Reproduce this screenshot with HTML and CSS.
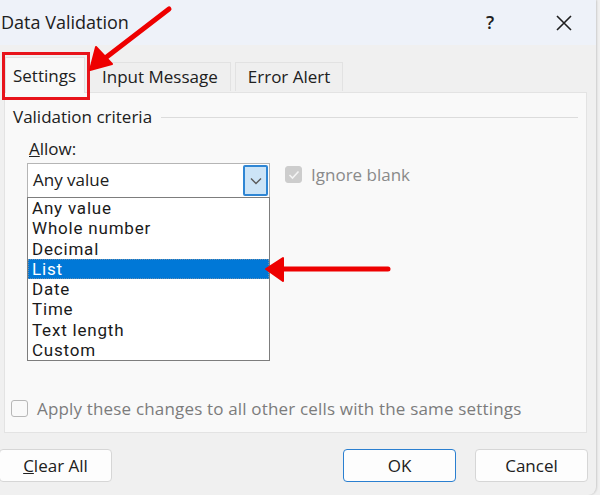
FILE: index.html
```html
<!DOCTYPE html>
<html lang="en">
<head>
    <meta charset="UTF-8">
    <meta name="viewport" content="width=device-width, initial-scale=1.0">
    <title>Data Validation</title>
    <link rel="stylesheet" href="styles.css">
</head>
<body>
    <div class="dialog">
        <div class="titlebar">
            <span class="title">Data Validation</span>
            <span class="help">?</span>
            <span class="close">
                <svg width="16" height="16" viewBox="0 0 16 16"><path d="M1 1 L15 15 M15 1 L1 15" stroke="#1f1f1f" stroke-width="1.6" fill="none"/></svg>
            </span>
        </div>

        <div class="tabs">
            <div class="tab active">Settings</div>
            <div class="tab">Input Message</div>
            <div class="tab">Error Alert</div>
        </div>

        <div class="panel">
            <div class="group-title">
                <span>Validation criteria</span>
                <div class="rule"></div>
            </div>

            <div class="allow-label"><u>A</u>llow:</div>

            <div class="allow-row">
                <div class="combo-wrap">
                    <div class="combo">
                        <span class="combo-text">Any value</span>
                        <span class="combo-btn">
                            <svg width="12" height="8" viewBox="0 0 12 8"><path d="M1 1.5 L6 6.5 L11 1.5" stroke="#5a5a5a" stroke-width="1.4" fill="none"/></svg>
                        </span>
                    </div>
                    <ul class="listbox">
                        <li>Any value</li>
                        <li>Whole number</li>
                        <li>Decimal</li>
                        <li class="selected">List</li>
                        <li>Date</li>
                        <li>Time</li>
                        <li>Text length</li>
                        <li>Custom</li>
                    </ul>
                </div>
                <label class="check disabled">
                    <span class="box checked">
                        <svg width="12" height="10" viewBox="0 0 12 10"><path d="M1.5 5 L4.5 8 L10.5 1.5" stroke="#f4f4f4" stroke-width="1.6" fill="none"/></svg>
                    </span>
                    Ignore blank
                </label>
            </div>

            <label class="check apply">
                <span class="box"></span>
                Apply these changes to all other cells with the same settings
            </label>
        </div>

        <div class="buttons">
            <button class="btn clear"><u>C</u>lear All</button>
            <div class="spacer"></div>
            <button class="btn ok">OK</button>
            <button class="btn">Cancel</button>
        </div>
    </div>

    <!-- red annotation arrows drawn over the screenshot -->
    <svg class="marks" width="600" height="495" viewBox="0 0 600 495">
        <rect x="3.5" y="53.5" width="85" height="45" fill="none" stroke="#e8141b" stroke-width="3"/>
        <line x1="169" y1="9" x2="104" y2="59" stroke="#ee0000" stroke-width="5" stroke-linecap="round"/>
        <polygon points="90,70 96,47 112,64" fill="#ee0000" stroke="#ee0000" stroke-width="2" stroke-linejoin="round"/>
        <line x1="388" y1="269" x2="280" y2="269" stroke="#ee0000" stroke-width="5" stroke-linecap="round"/>
        <polygon points="266,269 283,258 283,281" fill="#ee0000" stroke="#ee0000" stroke-width="2" stroke-linejoin="round"/>
    </svg>
</body>
</html>
```

FILE: styles.css
```css
body {
    margin: 0;
    width: 600px;
    height: 495px;
    overflow: hidden;
    position: relative;
    font-family: "Open Sans", "Noto Sans", sans-serif;
    font-size: 17px;
    font-weight: 500;
    color: #202020;
    background-color: #f0f0f0;
}
.dialog {
    width: 596px;
    height: 495px;
    background: #f0f0f0;
    border-bottom-right-radius: 8px;
    box-shadow: 1px 0 2px rgba(0, 0, 0, 0.15);
}
.titlebar {
    height: 45px;
    display: flex;
    align-items: center;
    background: #eef2f9;
    padding-left: 1px;
}
.title {
    font-size: 18px;
    font-weight: 400;
    flex: 1;
    margin-top: -2px;
}
.help {
    font-size: 18px;
    font-weight: 600;
    width: 70px;
    margin-top: -2px;
}
.close {
    width: 40px;
    display: flex;
}

/* abas */
.tabs {
    display: flex;
    align-items: flex-end;
    height: 47px;
    padding-left: 5px;
}
.tab {
    height: 28px;
    line-height: 28px;
    padding: 0 12px;
    border: 1px solid #e2e2e2;
    border-bottom: none;
    background: #efefef;
    margin-left: 4px;
    margin-bottom: 1px;
}
.tab.active {
    height: 35px;
    line-height: 36px;
    margin-left: 0;
    margin-bottom: -1px;
    padding: 0 8px 0 7px;
    background: #f9f9f9;
    position: relative;
    z-index: 1;
}

.panel {
    height: 339px;
    margin: 0 9px 0 4px;
    background: #f9f9f9;
    border: 1px solid #e3e3e3;
    position: relative;
}
.group-title {
    display: flex;
    align-items: center;
    height: 23px;
    padding: 12px 8px 0 8px;
}
.group-title .rule {
    flex: 1;
    height: 1px;
    background: #dcdcdc;
    margin-left: 9px;
    margin-top: 1px;
}
.allow-label {
    height: 23px;
    line-height: 23px;
    margin: 9px 0 0 24px;
}
.allow-row {
    display: flex;
    align-items: flex-start;
    margin: 3px 0 0 22px;
}
.combo-wrap {
    width: 243px;
}
.combo {
    height: 33px;
    display: flex;
    align-items: center;
    background: #fff;
    border: 1px solid #b5b5b5;
    border-bottom: none;
}
.combo-text {
    flex: 1;
    padding-left: 5px;
    margin-top: -3px;
}
.combo-btn {
    width: 21px;
    height: 27px;
    margin-right: 1px;
    display: flex;
    align-items: center;
    justify-content: center;
    background: #cce4f7;
    border: 2px solid #2f86d4;
    border-radius: 2px;
}
.listbox {
    list-style: none;
    margin: 0;
    padding: 0;
    height: 162px;
    background: #fff;
    border: 1px solid #7d7d7d;
    font-family: Roboto, "Open Sans", sans-serif;
    font-weight: 400;
    letter-spacing: 0.8px;
    color: #1a1a1a;
}
.listbox li {
    height: 20.3px;
    line-height: 20px;
    padding-left: 4px;
}
.listbox li.selected {
    background: #0078d7;
    color: #fff;
    outline: 1px dotted #6a8fb0;
    outline-offset: -1px;
}

.check {
    display: flex;
    align-items: center;
    gap: 9px;
    color: #7c7c7c;
}
.check.disabled {
    margin: 0 0 0 15px;
    color: #8a8a8a;
}
.box {
    width: 15px;
    height: 15px;
    border: 1px solid #b7b7b7;
    border-radius: 3px;
    background: #f9f9f9;
    display: flex;
    align-items: center;
    justify-content: center;
}
.box.checked {
    background: #cdcdcd;
    border-color: #cdcdcd;
}
.check.apply {
    position: absolute;
    left: 6px;
    top: 304px;
    letter-spacing: 0.17px;
}

/* botoes */
.buttons {
    display: flex;
    padding-top: 16px;
    padding-right: 8px;
}
.btn {
    height: 33px;
    font-family: inherit;
    font-size: 17px;
    font-weight: 500;
    color: #202020;
    background: #fdfdfd;
    border: 1px solid #d6d6d6;
    border-radius: 4px;
    width: 113px;
}
.btn.clear {
    width: 113px;
    margin-left: -1px;
}
.btn.ok {
    border: 1px solid #2a7fd0;
    margin-right: 19px;
}
.spacer {
    flex: 1;
}

.marks {
    position: absolute;
    left: 0;
    top: 0;
    pointer-events: none;
}
```
